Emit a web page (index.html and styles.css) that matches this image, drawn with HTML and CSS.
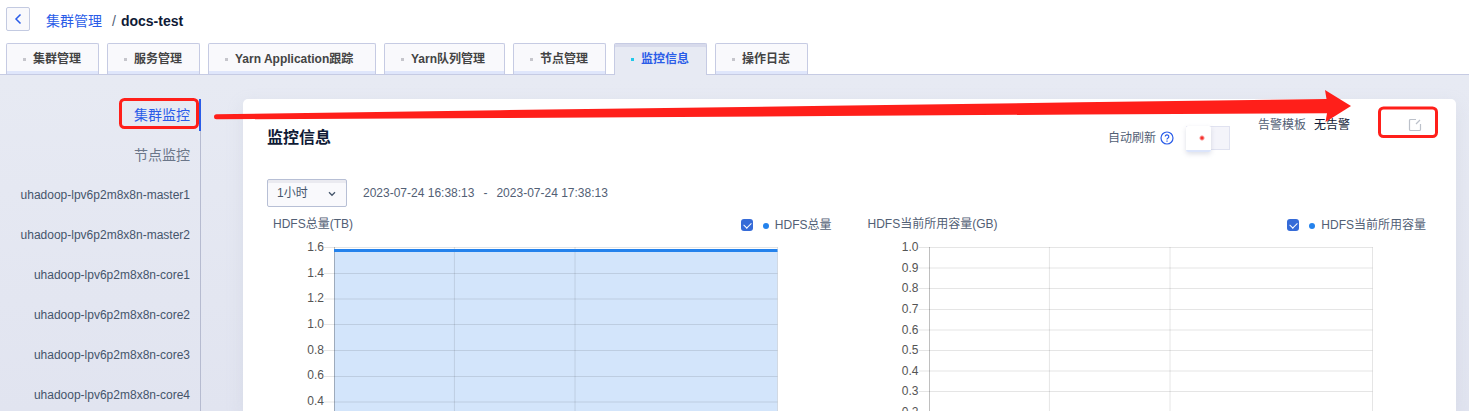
FILE: index.html
```html
<!DOCTYPE html>
<html lang="zh-CN">
<head>
<meta charset="utf-8">
<title>监控信息</title>
<link rel="stylesheet" href="styles.css">
</head>
<body>
<header class="top">
  <div class="crumbs">
    <button class="back" type="button" aria-label="返回"><svg width="8" height="12" viewBox="0 0 8 12"><path d="M6.500 1.500 2 6l4.500 4.500"/></svg></button>
    <a class="crumb-link" href="#">集群管理</a>
    <span class="slash">/</span>
    <strong class="crumb-now">docs-test</strong>
  </div>
  <nav class="tabs">
    <button class="tab" type="button">集群管理</button>
    <button class="tab" type="button">服务管理</button>
    <button class="tab tab-long" type="button">Yarn Application跟踪</button>
    <button class="tab tab-medium" type="button">Yarn队列管理</button>
    <button class="tab" type="button">节点管理</button>
    <button class="tab active" type="button">监控信息</button>
    <button class="tab" type="button">操作日志</button>
  </nav>
</header>
<main class="content">
  <nav class="side">
    <a class="side-item group active" href="#">集群监控</a>
    <a class="side-item group" href="#">节点监控</a>
    <a class="side-item" href="#">uhadoop-lpv6p2m8x8n-master1</a>
    <a class="side-item" href="#">uhadoop-lpv6p2m8x8n-master2</a>
    <a class="side-item" href="#">uhadoop-lpv6p2m8x8n-core1</a>
    <a class="side-item" href="#">uhadoop-lpv6p2m8x8n-core2</a>
    <a class="side-item" href="#">uhadoop-lpv6p2m8x8n-core3</a>
    <a class="side-item" href="#">uhadoop-lpv6p2m8x8n-core4</a>
  </nav>
  <section class="panel">
    <div class="panel-head">
      <h1 class="title">监控信息</h1>
      <div class="refresh">
        <label for="auto">自动刷新</label>
        <svg class="help" width="14" height="14" viewBox="0 0 14 14"><circle cx="7" cy="7" r="6"/><path d="M5.200 5.600a1.800 1.800 0 1 1 2.600 1.600c-.6.3-.8.6-.8 1.200M7 9.600v1.100"/></svg>
        <input class="switch" id="auto" type="checkbox" role="switch">
      </div>
      <div class="alarm">
        <span>告警模板</span>
        <span class="alarm-value">无告警</span>
      </div>
      <button class="edit" type="button" aria-label="编辑"><svg width="14" height="14" viewBox="0 0 14 14"><path d="M8 1.500H2.500a1 1 0 0 0-1 1v9a1 1 0 0 0 1 1h9a1 1 0 0 0 1-1V6M8 6l4-4"/></svg></button>
    </div>
    <div class="range">
      <div class="select-wrap">
        <select class="select" aria-label="时间范围"><option>1小时</option></select>
        <svg class="chevron" width="8" height="6" viewBox="0 0 8 6"><path d="M1 1.300 4 4.300l3-3"/></svg>
      </div>
      <div class="dates"><span>2023-07-24 16:38:13</span><span>-</span><span>2023-07-24 17:38:13</span></div>
    </div>
    <div class="charts">
      <article class="chart">
        <div class="chart-head">
          <h2 class="chart-name">HDFS总量(TB)</h2>
          <label class="legend"><input class="check" type="checkbox" checked><i class="dot"></i>HDFS总量</label>
        </div>
        <div class="plot">
          <div class="scale"><span>1.6</span><span>1.4</span><span>1.2</span><span>1.0</span><span>0.8</span><span>0.6</span><span>0.4</span></div>
          <svg class="graph" height="164">
            <rect class="area" x="0" y="4" width="100%" height="160"/>
            <g class="grid">
              <line x1="-10" x2="100%" y1="0.500" y2="0.500"/><line x1="-10" x2="100%" y1="26.500" y2="26.500"/><line x1="-10" x2="100%" y1="52" y2="52"/><line x1="-10" x2="100%" y1="77.500" y2="77.500"/><line x1="-10" x2="100%" y1="103.500" y2="103.500"/><line x1="-10" x2="100%" y1="129.500" y2="129.500"/><line x1="-10" x2="100%" y1="155" y2="155"/>
              <line x1="27.150%" x2="27.150%" y1="0" y2="164"/><line x1="54.350%" x2="54.350%" y1="0" y2="164"/><line x1="100%" x2="100%" y1="0" y2="164"/>
            </g>
            <line class="axis" x1="0.500" x2="0.500" y1="0" y2="164"/>
            <line class="series" x1="0" x2="100%" y1="3.500" y2="3.500"/>
          </svg>
        </div>
      </article>
      <article class="chart">
        <div class="chart-head">
          <h2 class="chart-name">HDFS当前所用容量(GB)</h2>
          <label class="legend"><input class="check" type="checkbox" checked><i class="dot"></i>HDFS当前所用容量</label>
        </div>
        <div class="plot">
          <div class="scale scale-fine"><span>1.0</span><span>0.9</span><span>0.8</span><span>0.7</span><span>0.6</span><span>0.5</span><span>0.4</span><span>0.3</span><span>0.2</span></div>
          <svg class="graph" height="164">
            <g class="grid">
              <line x1="-10" x2="100%" y1="0.500" y2="0.500"/><line x1="-10" x2="100%" y1="21" y2="21"/><line x1="-10" x2="100%" y1="41.500" y2="41.500"/><line x1="-10" x2="100%" y1="62.500" y2="62.500"/><line x1="-10" x2="100%" y1="83" y2="83"/><line x1="-10" x2="100%" y1="103.500" y2="103.500"/><line x1="-10" x2="100%" y1="124" y2="124"/><line x1="-10" x2="100%" y1="144.500" y2="144.500"/>
              <line x1="27.150%" x2="27.150%" y1="0" y2="164"/><line x1="54.350%" x2="54.350%" y1="0" y2="164"/><line x1="100%" x2="100%" y1="0" y2="164"/>
            </g>
            <line class="axis" x1="0.500" x2="0.500" y1="0" y2="164"/>
          </svg>
        </div>
      </article>
    </div>
  </section>
</main>
<svg class="notes" width="1469" height="160" viewBox="0 0 1469 160" aria-hidden="true">
  <path class="arrow" d="M216.500 114.300 500 110.200 830 105.800 1080 102.300 1326.500 99 1325 90 1351 106 1325.500 122 1327 113.300 1080 114.500 830 116 500 118 216.500 119.300a2.500 2.500 0 0 1 0-5z"/>
  <rect class="box" x="120.500" y="99.500" width="77" height="28" rx="4"/>
  <rect class="box" x="1379.500" y="108" width="57" height="28.500" rx="4"/>
</svg>
</body>
</html>
```
FILE: styles.css
```css
* { box-sizing: border-box; }
body {
  margin: 0;
  height: 100vh;
  overflow: hidden;
  display: flex;
  flex-direction: column;
  position: relative;
  font-family: "Liberation Sans", "Noto Sans CJK SC", sans-serif;
  font-size: 12px;
  line-height: 16px;
  color: #526075;
  background: linear-gradient(#e7eaf3 80px, #e1e4f0 411px);
}
svg { fill: none; display: block; }
a { text-decoration: none; color: inherit; }
button, select { font: inherit; color: inherit; }

.top { background: #fff; border-bottom: 1px solid #c6cbe3; padding: 7px 6px 0; }
.crumbs { display: flex; align-items: center; height: 24px; font-size: 14px; color: #0f1a36; }
.back {
  width: 24px; height: 24px; padding: 0; margin-right: 16px;
  display: grid; place-items: center;
  background: #f9f9fc; border: 1px solid #c3cae1; border-radius: 2px;
}
.back svg { stroke: #2a5ce8; stroke-width: 1.5; }
.crumb-link { color: #2a5ce8; margin-right: 10px; padding-top: 3px; }
.slash { color: #526075; margin-right: 5px; padding-top: 3px; }
.crumb-now { padding-top: 3px; }

.tabs { display: flex; gap: 8px; margin-top: 12px; }
.tab {
  display: flex; align-items: center; gap: 7px;
  height: 31px; min-width: 93px; padding: 0 16px;
  font-weight: bold; color: #444; white-space: nowrap;
  background: #f9f9fc; border: 1px solid #c6cbe3; border-bottom: 0;
  border-radius: 2px 2px 0 0; box-shadow: inset 0 -3px #dfe6fb;
}
.tab-medium { min-width: 121px; }
.tab-long { min-width: 168px; }
.tab::before { content: ""; width: 3px; height: 3px; background: #c6c6cc; }
.tab.active {
  height: 32px; margin-bottom: -1px; padding-bottom: 1px; color: #2a5ce8;
  background: #e7eaf3; box-shadow: inset 0 3px #d7daeb;
}
.tab.active::before { background: #1fc8ea; }

.content { flex: 1; min-height: 0; display: flex; gap: 42px; padding: 24px 13px 0 0; }
.side { width: 201px; flex: none; border-right: 1px solid #b6bbd0; }
.side-item {
  display: flex; align-items: center; justify-content: flex-end;
  height: 32px; margin: 0 -1px 8px 0; padding-right: 11px;
  color: #45556b; white-space: nowrap;
}
.group { font-size: 14px; color: #6b7689; }
.side-item.active { color: #2a5ce8; border-right: 2px solid #2a5ce8; padding-right: 9px; }

.panel {
  flex: 1; min-width: 0; padding: 0 24px;
  background: #fff; border-radius: 5px 5px 0 0;
  box-shadow: 0 6px 16px #b9bed040;
}
.panel-head { display: flex; align-items: flex-start; height: 64px; padding-top: 16px; }
.title { margin: 0; flex: 1; padding-top: 11px; font-size: 16px; line-height: 24px; color: #0f1a36; }
.refresh { display: flex; align-items: center; padding-top: 11px; margin-right: 28px; }
.help { margin: 0 12px 0 4px; stroke: #2a5ce8; stroke-width: 1.2; }
.switch {
  appearance: none; position: relative; margin: 0; width: 44px; height: 24px;
  background: #f4f4fa; border: 1px solid #e0e2f0; border-left: 0;
}
.switch::before {
  content: ""; position: absolute; left: 0; top: -1px; width: 25px; height: 24px;
  background: radial-gradient(circle at 16px 12px, #f5302c 1px, #fff 3px);
  border-bottom: 2px solid #dce5fb; border-radius: 2px; box-shadow: 0 2px 5px #9aa0b855;
}
.alarm { display: flex; gap: 8px; padding-top: 2px; margin-right: 58px; }
.alarm-value { color: #0f1a36; }
.edit { padding: 0; margin: 3px 10px 0 0; border: 0; background: none; }
.edit svg { stroke: #bcc1ca; stroke-width: 1.2; }

.range { display: flex; align-items: center; gap: 16px; margin-top: 16px; }
.select-wrap { position: relative; }
.select {
  appearance: none; display: block; width: 80px; height: 28px; padding: 0 9px;
  border: 1px solid #b7bfd5; border-radius: 2px;
  background: #f9f9fc; box-shadow: inset 0 3px #eaeaf0; color: #45556b;
}
.chevron { position: absolute; right: 11px; top: 12px; stroke: #45556b; stroke-width: 1.3; pointer-events: none; }
.dates { display: flex; gap: 9px; }

.charts { display: grid; grid-template-columns: 1fr 1fr; gap: 24px; margin-top: 8px; }
.chart { min-width: 0; }
.chart-head { display: flex; justify-content: space-between; padding: 0 6px; height: 32px; }
.chart-name { margin: 0; font-size: 12px; font-weight: normal; line-height: 18px; }
.legend { display: flex; align-items: center; height: 20px; }
.check {
  appearance: none; position: relative; margin: 0 10px 0 0; width: 12px; height: 12px;
  background: #356bd8; border-radius: 3px;
}
.check::after {
  content: ""; position: absolute; left: 3px; top: 3px; width: 6px; height: 4px;
  border: solid #fff; border-width: 0 0 1px 1px; transform: rotate(-45deg);
}
.dot { width: 6px; height: 6px; margin: 2px 6px 0 0; border-radius: 50%; background: #2482ec; }
.plot { display: grid; grid-template-columns: 57px 1fr; gap: 10px; padding-right: 60px; }
.scale {
  display: flex; flex-direction: column; justify-content: space-between;
  height: 170px; margin-top: -8px; text-align: right; color: #545454;
}
.scale-fine { height: 181px; }
.graph { width: 100%; overflow: visible; }
.grid { stroke: #000; stroke-opacity: 0.1; }
.axis { stroke: #000; stroke-opacity: 0.25; }
.area { fill: #d3e5fb; }
.series { stroke: #2482ec; stroke-width: 3; }

.notes { position: absolute; left: 0; top: 0; pointer-events: none; }
.arrow { fill: #ff1f1a; }
.box { stroke: #ff1f1a; stroke-width: 3; }
```
